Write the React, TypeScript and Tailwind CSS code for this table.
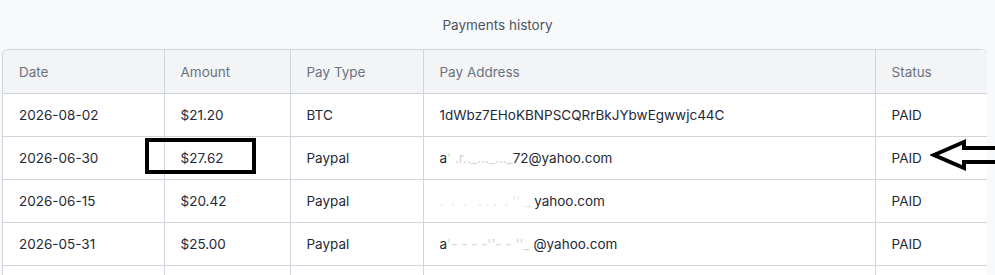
import React from "react"

type Payment = {
  date: string
  amount: string
  type: string
  address: React.ReactNode
  status: string
}

const payments: Payment[] = [
  { date: "2026-08-02", amount: "$21.20", type: "BTC", address: "1dWbz7EHoKBNPSCQRrBkJYbwEgwwjc44C", status: "PAID" },
  {
    date: "2026-06-30",
    amount: "$27.62",
    type: "Paypal",
    address: (
      <>
        a<span className="text-gray-300">&#39; .r.._..._..._</span>72@yahoo.com
      </>
    ),
    status: "PAID",
  },
  {
    date: "2026-06-15",
    amount: "$20.42",
    type: "Paypal",
    address: (
      <>
        <span className="text-gray-200">.  .  .   . . .  . &#39;&#39; _ </span>yahoo.com
      </>
    ),
    status: "PAID",
  },
  {
    date: "2026-05-31",
    amount: "$25.00",
    type: "Paypal",
    address: (
      <>
        a<span className="text-gray-300">&#39;- - - -&#39;&#39;- - &#39;&#39;_ </span>@yahoo.com
      </>
    ),
    status: "PAID",
  },
  // next row is below the fold, only its top border shows
  { date: "", amount: "", type: "", address: "", status: "" },
]

const cols = ["w-[161px]", "w-[126px]", "w-[133px]", "w-[452px]", "w-[112px]"]

export default function App() {
  return (
    <div className="relative h-[275px] w-[995px] overflow-hidden bg-[#f8f9fb] font-['Inter','Noto_Sans',sans-serif] text-[13.5px]">
      {/* Title */}
      <div className="pt-[15px] text-center leading-5 text-[#4b5563]">Payments history</div>

      {/* Table */}
      <div className="ml-[2px] mt-[14px] w-[985px] overflow-hidden rounded-t-md border-l border-t border-[#d1d5db]">
        <table className="w-full table-fixed border-collapse">
          <colgroup>
            {cols.map((c, i) => (
              <col key={i} className={c} />
            ))}
          </colgroup>
          <thead>
            <tr className="h-[43px] bg-[#f3f4f6] text-left text-[#6b7280]">
              {["Date", "Amount", "Pay Type", "Pay Address", "Status"].map((h) => (
                <th key={h} className="border-b border-r border-[#d1d5db] px-[16px] pt-[2px] font-normal">
                  {h}
                </th>
              ))}
            </tr>
          </thead>
          <tbody className="bg-white text-[#1f2937]">
            {payments.map((p, i) => (
              <tr key={i} className="h-[43px]">
                <td className="border-b border-r border-[#d1d5db] px-[16px] pt-[2px]">{p.date}</td>
                <td className="border-b border-r border-[#d1d5db] px-[16px] pt-[2px]">{p.amount}</td>
                <td className="border-b border-r border-[#d1d5db] px-[16px] pt-[2px]">{p.type}</td>
                <td className="whitespace-pre border-b border-r border-[#d1d5db] px-[16px] pt-[2px]">{p.address}</td>
                <td className="border-b border-r border-[#d1d5db] px-[16px] pt-[2px]">{p.status}</td>
              </tr>
            ))}
          </tbody>
        </table>
      </div>

      {/* Annotation box */}
      <div className="absolute left-[145px] top-[138px] h-[36px] w-[111px] border-[4px] border-black" />

      {/* Annotation arrow */}
      <svg className="absolute left-[930px] top-[138px]" width="65" height="34" viewBox="0 0 65 34">
        <polygon
          points="4,17 34,4 34,10 70,10 70,24 34,24 34,30"
          fill="none"
          stroke="black"
          strokeWidth="4"
          strokeLinejoin="miter"
        />
      </svg>
    </div>
  )
}
